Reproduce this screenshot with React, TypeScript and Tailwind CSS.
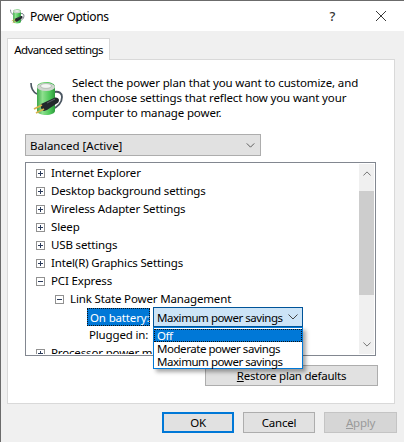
import { ReactNode } from 'react';

function BatteryIcon({ className }: { className: string }) {
  return (
    <svg viewBox="28 77 36 37" className={className}>
      <defs>
        <linearGradient id="body" x1="0" x2="1" y1="0" y2="0">
          <stop offset="0" stopColor="#3fa84a" />
          <stop offset="0.3" stopColor="#8fe08f" />
          <stop offset="0.7" stopColor="#4fc85a" />
          <stop offset="1" stopColor="#2c9a3c" />
        </linearGradient>
      </defs>
      {/* cable behind the battery */}
      <path d="M31 81c0 6 2 9 6 11" fill="none" stroke="#4a5560" strokeWidth="1.6" />
      <path d="M54 90c5-1 8 1 8 5s-2 9-11 13" fill="none" stroke="#4a5560" strokeWidth="1.8" />
      {/* battery */}
      <path d="M37 85c0-3 4-5 9-5s9 2 9 5v24c0 2-4 4-9 4s-9-2-9-4z" fill="url(#body)" />
      <ellipse cx="46" cy="85" rx="9" ry="4" fill="#cfd6cf" />
      <ellipse cx="46" cy="84" rx="5.5" ry="2.4" fill="#f2f5f2" stroke="#9aa49a" strokeWidth="0.6" />
      {/* plug */}
      <path d="M41 102l13-6c2-1 5 0 5 2s-1 3-3 4l-9 6-3 1c-2 0-4-4-3-7z" fill="#23282c" />
      <path d="M47 101l8-4" stroke="#6b747a" strokeWidth="0.8" />
      <path d="M42 103l-8 4M44 107l-8 4" stroke="#d8b24a" strokeWidth="1.8" />
    </svg>
  );
}

function Chevron({ className }: { className: string }) {
  return (
    <svg viewBox="0 0 10 6" className={className} fill="none" stroke="currentColor" strokeWidth="1">
      <path d="M0.5 0.5L5 5L9.5 0.5" />
    </svg>
  );
}

function Expander({ open }: { open?: boolean }) {
  return (
    <span className="relative mt-px w-[9px] h-[9px] shrink-0 border border-[#919191] bg-white">
      <span className="absolute left-px right-px top-[3px] h-px bg-[#2a3a5a]" />
      {!open && <span className="absolute top-px bottom-px left-[3px] w-px bg-[#2a3a5a]" />}
    </span>
  );
}

function TreeRow({ indent, open, children }: { indent: string; open?: boolean; children: ReactNode }) {
  return (
    <div className={`flex items-center gap-[6px] h-[18px] whitespace-nowrap ${indent}`}>
      <Expander open={open} />
      <span className="-mt-px">{children}</span>
    </div>
  );
}

function WinButton({ className, children }: { className: string; children: ReactNode }) {
  return (
    <button className={`flex items-center justify-center bg-[#e1e1e1] ${className}`}>{children}</button>
  );
}

export default function App() {
  const groups = [
    'Internet Explorer',
    'Desktop background settings',
    'Wireless Adapter Settings',
    'Sleep',
    'USB settings',
    'Intel(R) Graphics Settings',
  ];

  return (
    <div className="w-[404px] h-[442px] flex flex-col overflow-hidden bg-[#f0f0f0] border-l border-t border-[#6b6b6b] font-['Noto_Sans',sans-serif] text-[11.5px] leading-[15px] text-black tracking-[-0.25px]">
      {/* Title bar */}
      <div className="h-[30px] shrink-0 bg-white flex items-center pl-[8px] text-[12px] tracking-[-0.35px]">
        <BatteryIcon className="w-[16px] h-[16px]" />
        <span className="ml-[5px]">Power Options</span>
        <span className="ml-auto mr-[41px] text-[13px] font-medium text-[#333]">?</span>
        <svg viewBox="0 0 10 10" className="w-[10px] h-[10px] mr-[18px]" fill="none" stroke="#222" strokeWidth="0.9">
          <path d="M0 0L10 10M10 0L0 10" />
        </svg>
      </div>

      {/* Tab strip and panel */}
      <div className="flex-1 flex flex-col pl-[6px] pr-[9px] pt-[7px]">
        <div className="w-[103px] h-[22px] -mb-px relative z-10 bg-white border border-b-0 border-[#d9d9d9] flex items-center justify-center pb-px whitespace-nowrap tracking-[-0.6px]">
          Advanced settings
        </div>
        <div className="h-[345px] bg-white border border-[#d9d9d9] pl-[17px] pr-[15px] flex flex-col">
          <div className="flex pt-[15px] h-[74px] shrink-0">
            <BatteryIcon className="w-[36px] h-[37px] ml-[3px] mt-[4px] shrink-0" />
            <p className="ml-[8px] w-[300px] whitespace-pre-line tracking-[-0.12px]">
              {'Select the power plan that you want to customize, and\nthen choose settings that reflect how you want your\ncomputer to manage power.'}
            </p>
          </div>

          {/* Plan select */}
          <div className="w-[236px] h-[22px] shrink-0 bg-[#e1e1e1] border border-[#adadad] flex items-center pl-[4px] pr-[5px]">
            <span className="tracking-[0px]">Balanced [Active]</span>
            <Chevron className="w-[9px] h-[5px] ml-auto text-[#444]" />
          </div>

          {/* Settings tree */}
          <div className="mt-[6px] w-[351px] h-[194px] shrink-0 flex border border-[#828790] bg-white tracking-[-0.15px]">
            <div className="flex-1 pt-px min-w-0">
              {groups.map((g) => (
                <TreeRow key={g} indent="pl-[10px]">{g}</TreeRow>
              ))}
              <TreeRow indent="pl-[10px]" open>PCI Express</TreeRow>
              <TreeRow indent="pl-[29px]" open>Link State Power Management</TreeRow>
              <div className="flex items-center h-[18px] pl-[61px] relative whitespace-nowrap">
                <span className="w-[63px] h-[18px] bg-[#0078d7] text-white border border-dotted border-[#111] pl-[2px] flex items-center">
                  On battery:
                </span>
                <div className="relative ml-[3px] w-[150px] h-[20px] z-20 tracking-[-0.45px]">
                  <div className="h-[20px] bg-[#cce4f7] border border-[#005499] flex items-center pl-[3px] pr-[4px]">
                    <span className="pt-px">Maximum power savings</span>
                    <Chevron className="w-[10px] h-[6px] ml-auto text-[#444]" />
                  </div>
                  {/* Open dropdown list */}
                  <div className="absolute left-0 top-[20px] w-[150px] h-[42px] bg-white border border-[#0078d7] shadow-[3px_3px_4px_rgba(0,0,0,0.35)] leading-[13px]">
                    <div className="h-[13px] mt-px bg-[#0078d7] text-white border border-dotted border-[#111] pl-[2px] flex items-center">Off</div>
                    <div className="h-[13px] pl-[3px] flex items-center">Moderate power savings</div>
                    <div className="h-[13px] pl-[3px] flex items-center">Maximum power savings</div>
                  </div>
                </div>
              </div>
              <div className="flex items-center h-[18px] pl-[63px] pb-px whitespace-nowrap">Plugged in:</div>
              <div className="h-[10px] overflow-hidden">
                <TreeRow indent="pl-[10px]">Processor power management</TreeRow>
              </div>
            </div>

            {/* Scrollbar */}
            <div className="w-[15px] my-px mr-px shrink-0 flex flex-col bg-[#f0f0f0]">
              <div className="h-[27px] pt-[7px] flex justify-center">
                <Chevron className="w-[8px] h-[5px] rotate-180 text-[#555]" />
              </div>
              <div className="h-[104px] bg-[#cdcdcd]" />
              <div className="flex-1 flex items-end justify-center pb-[7px]">
                <Chevron className="w-[8px] h-[5px] text-[#555]" />
              </div>
            </div>
          </div>

          <div className="mt-[9px] flex justify-end pr-[1px]">
            <WinButton className="w-[173px] h-[21px] border border-[#adadad]">
              <span><span className="underline">R</span>estore plan defaults</span>
            </WinButton>
          </div>
        </div>

        {/* Dialog buttons */}
        <div className="mt-[8px] flex justify-end gap-[9px] -mr-[2px]">
          <WinButton className="w-[72px] h-[21px] border-2 border-[#0078d7]">OK</WinButton>
          <WinButton className="w-[72px] h-[21px] border border-[#adadad]">Cancel</WinButton>
          <WinButton className="w-[73px] h-[21px] !bg-[#d6d6d6] border border-[#c4c4c4] text-[#9a9a9a]">
            <span><span className="underline">A</span>pply</span>
          </WinButton>
        </div>
      </div>
    </div>
  );
}
